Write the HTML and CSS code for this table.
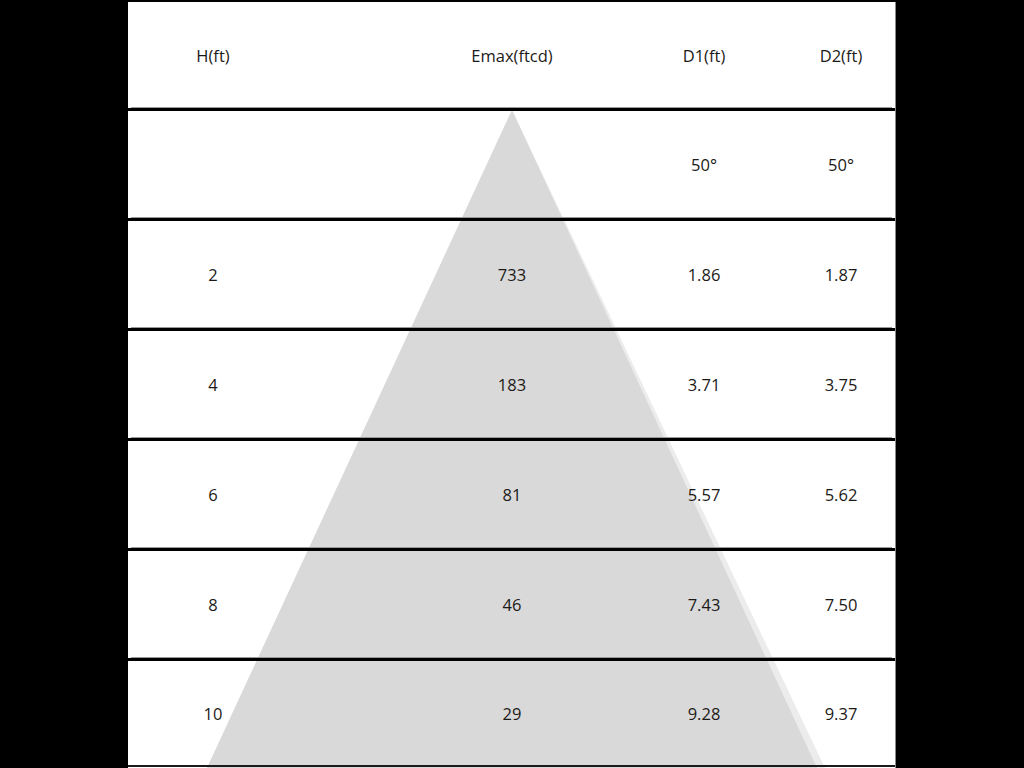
FILE: index.html
```html
<!DOCTYPE html>
<html>
<head>
<meta charset="utf-8">
<link rel="stylesheet" href="styles.css">
</head>
<body>
<div class="panel">
  <svg class="cone" viewBox="0 0 768 766" width="768" height="766">
    <polygon points="384,108 79,766 697,766" fill="#ececec"/>
    <polygon points="384,108 79,766 689,766" fill="#d9d9d9"/>
  </svg>
  <div class="row head">
    <div class="c c1">H(ft)</div>
    <div class="c c2">Emax(ftcd)</div>
    <div class="c c3">D1(ft)</div>
    <div class="c c4">D2(ft)</div>
  </div>
  <div class="row">
    <div class="c c1"></div>
    <div class="c c2"></div>
    <div class="c c3">50°</div>
    <div class="c c4">50°</div>
  </div>
  <div class="row">
    <div class="c c1">2</div>
    <div class="c c2">733</div>
    <div class="c c3">1.86</div>
    <div class="c c4">1.87</div>
  </div>
  <div class="row">
    <div class="c c1">4</div>
    <div class="c c2">183</div>
    <div class="c c3">3.71</div>
    <div class="c c4">3.75</div>
  </div>
  <div class="row">
    <div class="c c1">6</div>
    <div class="c c2">81</div>
    <div class="c c3">5.57</div>
    <div class="c c4">5.62</div>
  </div>
  <div class="row">
    <div class="c c1">8</div>
    <div class="c c2">46</div>
    <div class="c c3">7.43</div>
    <div class="c c4">7.50</div>
  </div>
  <div class="row last">
    <div class="c c1">10</div>
    <div class="c c2">29</div>
    <div class="c c3">9.28</div>
    <div class="c c4">9.37</div>
  </div>
</div>
</body>
</html>
```

FILE: styles.css
```css
html, body {
  margin: 0;
  padding: 0;
  background: #000;
}
body {
  padding-top: 2px;
  height: 766px;
  overflow: hidden;
}
.panel {
  position: relative;
  width: 767px;
  height: 766px;
  margin: 0 0 0 128px;
  background: #fff;
  border-right: 1px solid #8a8a8a;
  display: flex;
  flex-direction: column;
  font-family: "Open Sans", "Liberation Sans", Arial, sans-serif;
  font-size: 16.5px;
  color: #1c1a17;
}
.cone {
  position: absolute;
  left: 0;
  top: 0;
  z-index: 0;
}
.row {
  position: relative;
  z-index: 1;
  display: flex;
  align-items: center;
  height: 107px;
  border-top: 3px solid #000;
  box-shadow: 0 -4px 0 -3px #9a9a9a;
}
.row.head {
  height: 106px;
  border-top: none;
  box-shadow: none;
}
.row.last {
  height: 104px;
  border-bottom: 2px solid #1a1a1a;
}
.c {
  text-align: center;
  white-space: nowrap;
}
.c1 { width: 170px; }
.c2 { width: 200px; margin-left: 114px; }
.c3 { width: 104px; margin-left: 40px; }
.c4 { width: 108px; margin-left: 31px; }
```
